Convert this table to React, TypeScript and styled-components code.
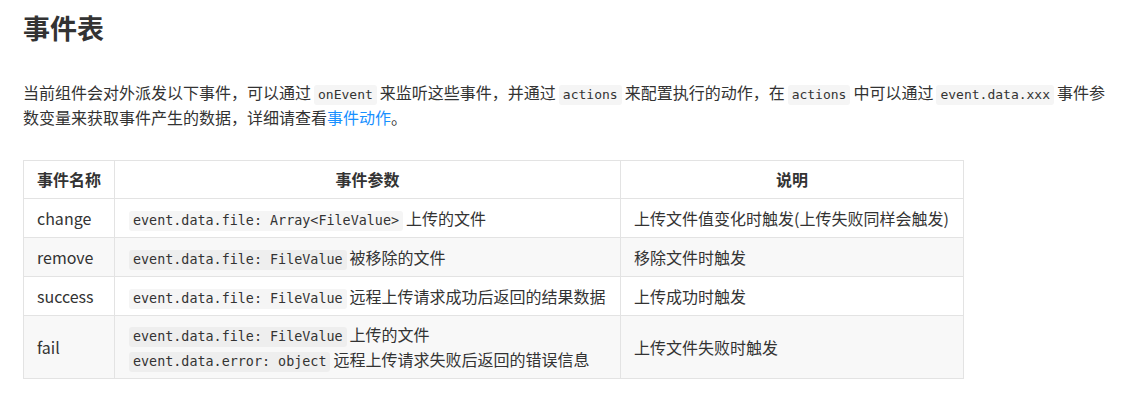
import React from 'react';
import styled, { createGlobalStyle } from 'styled-components';

const GlobalStyle = createGlobalStyle`
  body {
    margin: 0;
    background: #fff;
    color: #333;
    font-family: "Noto Sans CJK SC", "Noto Sans", sans-serif;
  }
`;

const Page = styled.div`
  padding: 10px 23px 20px;
`;

const Title = styled.h2`
  margin: 0;
  font-size: 27px;
  line-height: 36px;
  font-weight: 700;
  color: #333;
`;

const Intro = styled.p`
  margin: 34px 0 0;
  font-size: 16px;
  line-height: 25px;
  color: #333;
`;

const Code = styled.code<{ $shade?: boolean; $size?: number }>`
  font-family: "DejaVu Sans Mono", "Liberation Mono", monospace;
  font-size: ${(p) => p.$size ?? 13}px;
  line-height: 18px;
  display: inline-block;
  padding: 1px 4px;
  margin: 0 3px;
  border-radius: 3px;
  background: ${(p) => (p.$shade ? '#eeeeee' : '#f5f5f5')};
  color: #333;
`;

const DocLink = styled.a`
  color: #1890ff;
  text-decoration: none;
  cursor: pointer;
`;

const Table = styled.table`
  margin-top: 30px;
  width: 940px;
  table-layout: fixed;
  border-collapse: collapse;
  font-size: 16px;
  color: #333;
`;

const Th = styled.th<{ $width: number }>`
  box-sizing: border-box;
  width: ${(p) => p.$width}px;
  border: 1px solid #e3e3e3;
  padding: 6px 13px;
  line-height: 25px;
  font-weight: 700;
  text-align: center;
`;

const Row = styled.tr<{ $shade?: boolean }>`
  background: ${(p) => (p.$shade ? '#f8f8f8' : '#fff')};
`;

const Td = styled.td`
  border: 1px solid #e3e3e3;
  padding: 6px 13px;
  line-height: 26px;
  vertical-align: middle;
  white-space: nowrap;
`;

const ParamCell = styled(Td)`
  padding-left: 11px;
  line-height: 25px;
`;

interface Param {
  code: string;
  text: string;
}

interface EventRow {
  name: string;
  params: Param[];
  desc: string;
}

const rows: EventRow[] = [
  {
    name: 'change',
    params: [{ code: 'event.data.file: Array<FileValue>', text: '上传的文件' }],
    desc: '上传文件值变化时触发(上传失败同样会触发)',
  },
  {
    name: 'remove',
    params: [{ code: 'event.data.file: FileValue', text: '被移除的文件' }],
    desc: '移除文件时触发',
  },
  {
    name: 'success',
    params: [{ code: 'event.data.file: FileValue', text: '远程上传请求成功后返回的结果数据' }],
    desc: '上传成功时触发',
  },
  {
    name: 'fail',
    params: [
      { code: 'event.data.file: FileValue', text: '上传的文件' },
      { code: 'event.data.error: object', text: '远程上传请求失败后返回的错误信息' },
    ],
    desc: '上传文件失败时触发',
  },
];

function App(): JSX.Element {
  return (
    <Page>
      <GlobalStyle />
      <Title>事件表</Title>
      <Intro>
        当前组件会对外派发以下事件，可以通过<Code>onEvent</Code>来监听这些事件，并通过
        <Code>actions</Code>来配置执行的动作，在<Code>actions</Code>中可以通过
        <Code>event.data.xxx</Code>事件参数变量来获取事件产生的数据，详细请查看
        <DocLink>事件动作</DocLink>。
      </Intro>
      <Table>
        <thead>
          <tr>
            <Th $width={91}>事件名称</Th>
            <Th $width={506}>事件参数</Th>
            <Th $width={343}>说明</Th>
          </tr>
        </thead>
        <tbody>
          {rows.map((row, i) => (
            <Row key={row.name} $shade={i % 2 === 1}>
              <Td>{row.name}</Td>
              <ParamCell>
                {row.params.map((p, j) => (
                  <React.Fragment key={p.code}>
                    {j > 0 ? <br /> : undefined}
                    <Code $shade={i % 2 === 1} $size={13.4}>
                      {p.code}
                    </Code>
                    {p.text}
                  </React.Fragment>
                ))}
              </ParamCell>
              <Td>{row.desc}</Td>
            </Row>
          ))}
        </tbody>
      </Table>
    </Page>
  );
}

export default App;
